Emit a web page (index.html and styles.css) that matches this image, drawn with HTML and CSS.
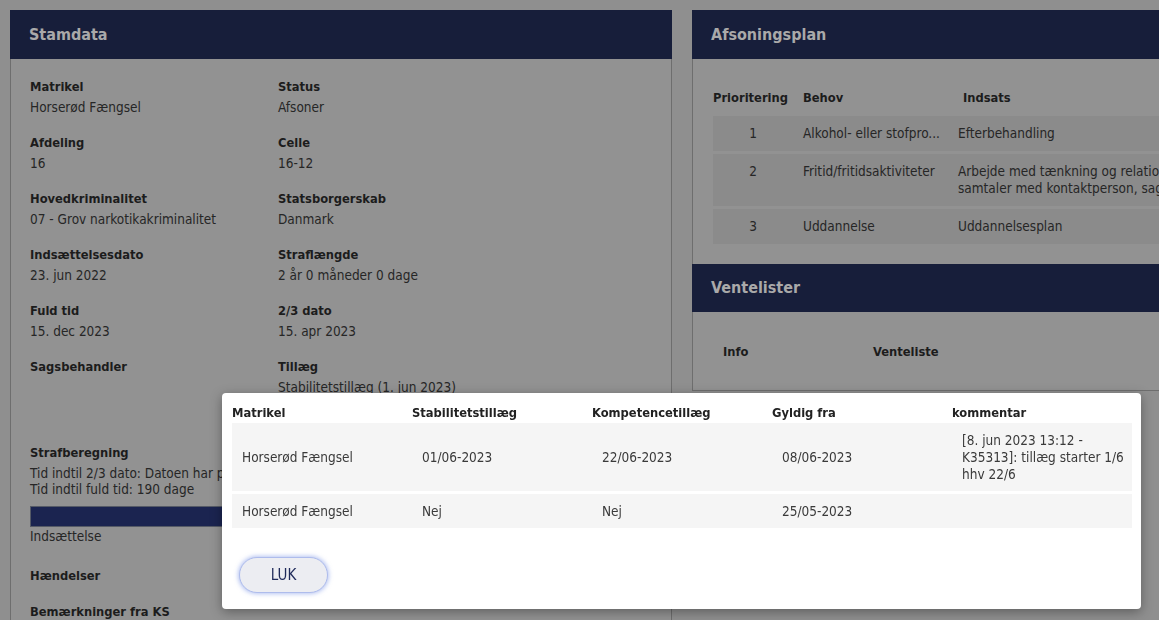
FILE: index.html
```html
<!DOCTYPE html>
<html lang="da">
<head>
<meta charset="utf-8">
<title>Stamdata</title>
<link rel="stylesheet" href="styles.css">
</head>
<body>
<div class="page">
  <section class="panel stamdata">
    <h2 class="panel-head">Stamdata</h2>
    <div class="panel-body">
      <div class="fields">
        <div class="field"><div class="label">Matrikel</div><div class="value">Horserød Fængsel</div></div>
        <div class="field"><div class="label">Status</div><div class="value">Afsoner</div></div>
        <div class="field"><div class="label">Afdeling</div><div class="value">16</div></div>
        <div class="field"><div class="label">Celle</div><div class="value">16-12</div></div>
        <div class="field"><div class="label">Hovedkriminalitet</div><div class="value">07 - Grov narkotikakriminalitet</div></div>
        <div class="field"><div class="label">Statsborgerskab</div><div class="value">Danmark</div></div>
        <div class="field"><div class="label">Indsættelsesdato</div><div class="value">23. jun 2022</div></div>
        <div class="field"><div class="label">Straflængde</div><div class="value">2 år 0 måneder 0 dage</div></div>
        <div class="field"><div class="label">Fuld tid</div><div class="value">15. dec 2023</div></div>
        <div class="field"><div class="label">2/3 dato</div><div class="value">15. apr 2023</div></div>
        <div class="field"><div class="label">Sagsbehandler</div><div class="value"></div></div>
        <div class="field"><div class="label">Tillæg</div><div class="value">Stabilitetstillæg (1. jun 2023)</div></div>
      </div>
      <div class="straf">
        <div class="label">Strafberegning</div>
        <div class="line">Tid indtil 2/3 dato: Datoen har passeret</div>
        <div class="line">Tid indtil fuld tid: 190 dage</div>
        <div class="progress"><div class="progress-fill" style="width: 79%"></div></div>
        <div class="line">Indsættelse</div>
      </div>
      <div class="label section">Hændelser</div>
      <div class="label section">Bemærkninger fra KS</div>
    </div>
  </section>

  <section class="panel right">
    <h2 class="panel-head">Afsoningsplan</h2>
    <div class="panel-body plan">
      <table class="plan-table">
        <thead>
          <tr><th class="prio">Prioritering</th><th class="behov">Behov</th><th class="indsats-h">Indsats</th></tr>
        </thead>
        <tbody>
          <tr><td class="prio">1</td><td class="behov">Alkohol- eller stofpro...</td><td>Efterbehandling</td></tr>
          <tr><td class="prio">2</td><td class="behov">Fritid/fritidsaktiviteter</td><td>Arbejde med tænkning og relationer gennem<br>samtaler med kontaktperson, sagsbehandler</td></tr>
          <tr><td class="prio">3</td><td class="behov">Uddannelse</td><td>Uddannelsesplan</td></tr>
        </tbody>
      </table>
    </div>
    <h2 class="panel-head">Ventelister</h2>
    <div class="panel-body vente">
      <table class="vente-table">
        <thead><tr><th class="info">Info</th><th>Venteliste</th></tr></thead>
      </table>
    </div>
  </section>
</div>

<div class="modal">
  <table class="modal-table">
    <thead>
      <tr><th>Matrikel</th><th>Stabilitetstillæg</th><th>Kompetencetillæg</th><th>Gyldig fra</th><th>kommentar</th></tr>
    </thead>
    <tbody>
      <tr><td>Horserød Fængsel</td><td>01/06-2023</td><td>22/06-2023</td><td>08/06-2023</td><td class="comment">[8. jun 2023 13:12 - K35313]: tillæg starter 1/6 hhv 22/6</td></tr>
      <tr><td>Horserød Fængsel</td><td>Nej</td><td>Nej</td><td>25/05-2023</td><td class="comment"></td></tr>
    </tbody>
  </table>
  <button class="luk" type="button">LUK</button>
</div>
</body>
</html>
```

FILE: styles.css
```css
* { box-sizing: border-box; }
html, body { margin: 0; padding: 0; }
body {
  background: #8f8f8f;
  font-family: "DejaVu Sans Condensed", "DejaVu Sans", sans-serif;
  font-size: 13.5px;
  color: #262626;
  overflow: hidden;
  width: 1159px;
  height: 620px;
}
.page {
  display: grid;
  grid-template-columns: 662px 700px;
  column-gap: 20px;
  padding: 10px;
  align-items: start;
}
.panel {
  border: 1px solid #6e6e6e;
  background: #929292;
}
.panel-head {
  margin: 0 -1px;
  height: 48px;
  line-height: 48px;
  padding-left: 19px;
  background: #171e3a;
  color: #a9a9a9;
  font-size: 16px;
  font-weight: bold;
}
.panel > .panel-head:first-child { margin-top: -1px; height: 49px; line-height: 49px; }
.stamdata .panel-body { padding: 18px 19px 20px; }
.fields {
  display: grid;
  grid-template-columns: 248px 1fr;
  row-gap: 16px;
}
.label { font-weight: bold; font-size: 12.8px; line-height: 20px; color: #1c1c1c; }
.value { line-height: 20px; min-height: 20px; }
.straf { margin-top: 46px; }
.straf .line { line-height: 16px; }
.straf .label { margin-bottom: 2px; }
.progress {
  margin: 9px 0 1px;
  height: 21px;
  border: 1px solid #555a66;
  background: #8a8a8a;
}
.progress-fill { height: 100%; background: #1b2450; }
.section { margin-top: 22px; }
.section + .section { margin-top: 16px; }

.plan { padding: 19px 0 17px 20px; }
.vente { padding: 20px 0 20px 20px; }
table { border-collapse: separate; border-spacing: 0 3px; }
th { text-align: left; font-weight: bold; font-size: 12.8px; color: #1c1c1c; }
.plan-table th, .plan-table td {
  padding: 7.5px 0;
  line-height: 17px;
  vertical-align: top;
}
.plan-table tbody td { background: #8b8b8b; padding: 9px 0; }
.plan-table .prio { width: 90px; padding-right: 10px; }
.plan-table td.prio { text-align: center; }
.plan-table .behov { width: 155px; }
.plan-table td.behov { padding-right: 6px; white-space: nowrap; }
.plan-table .indsats-h { padding-left: 5px; }
.plan-table td:last-child { width: 420px; padding-right: 10px; }
.vente-table th { padding: 7.5px 10px; line-height: 17px; }
.vente-table th.info { width: 150px; }

.modal {
  position: fixed;
  left: 222px;
  top: 393px;
  width: 919px;
  height: 216px;
  background: #ffffff;
  border-radius: 4px;
  box-shadow: 0 3px 12px rgba(0, 0, 0, 0.35);
  padding: 10px 10px 16px;
  color: #333333;
}
.modal-table { border-spacing: 0; width: 900px; table-layout: fixed; }
.modal-table th {
  width: 180px;
  padding: 0;
  line-height: 20px;
  color: #222222;
}
.modal-table td {
  background: #f5f5f5;
  padding: 8.5px 2px 8.5px 10px;
  line-height: 17px;
  vertical-align: middle;
  color: #3a3a3a;
}
.modal-table tbody tr + tr td { border-top: 3px solid #ffffff; }
.modal-table td.comment { vertical-align: top; }
.luk {
  display: block;
  margin: 29px 0 0 7px;
  width: 89px;
  height: 36px;
  border-radius: 18px;
  border: 1px solid #aebcec;
  box-shadow: 0 0 4px 1px rgba(120, 145, 230, 0.55);
  background: #ecedf2;
  color: #1f2a5a;
  font-family: "DejaVu Sans Condensed", "DejaVu Sans", sans-serif;
  font-size: 15px;
}
```
